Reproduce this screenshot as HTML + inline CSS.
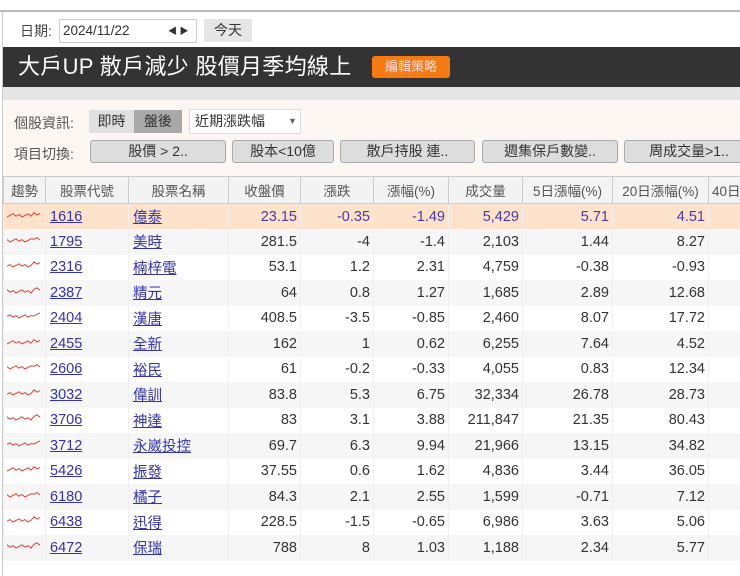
<!DOCTYPE html>
<html><head><meta charset="utf-8"><style>
*{margin:0;padding:0;box-sizing:border-box}
body{width:740px;height:576px;background:#fff;font-family:"Liberation Sans","Noto Sans CJK TC",sans-serif;color:#333;position:relative;overflow:hidden}
.a{position:absolute}
.top{left:0;top:10px;width:740px;height:2px;background:#bbb}
.lb{left:2px;top:12px;width:1px;height:564px;background:#ccc}
.btn{position:absolute;background:#ddd;border:1px solid #aaa;border-radius:3px;font-size:14px;text-align:center;line-height:20px;color:#333}
table{position:absolute;left:3px;top:176px;border-collapse:collapse;font-size:14.5px;table-layout:fixed;width:770px}
td,th{height:25.5px;padding:0 3px 0 3px;white-space:nowrap;overflow:hidden}
th{font-weight:normal;font-size:13.5px;color:#555;background:#f3f3f3;border:1px solid #ccc;height:27px;text-align:center}
td{text-align:right;border-left:1px solid #f0f0f0}
td.l{text-align:left;padding-left:4px}
td a{color:#3333aa;text-decoration:underline}
tr:nth-child(even) td{background:#f6f6f6}
tr.sel td{background:#fde2cc;color:#4a3aa8}
</style></head><body>
<div class="a top"></div><div class="a lb"></div>
<div class="a" style="left:20px;top:21px;font-size:14px;color:#444">日期:</div>
<div class="a" style="left:59px;top:19px;width:138px;height:24px;border:1px solid #ccc;background:#fff;font-size:13.5px;line-height:22px;padding-left:3px">2024/11/22<span style="position:absolute;left:108px;font-size:9px">◀ ▶</span></div>
<div class="a" style="left:204px;top:19px;width:48px;height:23px;background:#e6e6e6;font-size:14px;text-align:center;line-height:23px">今天</div>
<div class="a" style="left:3px;top:47px;width:737px;height:40px;background:#333"></div>
<div class="a" style="left:18px;top:53px;font-size:22px;color:#fff;line-height:28px;letter-spacing:0.3px">大戶UP 散戶減少 股價月季均線上</div>
<div class="a" style="left:372px;top:56px;width:78px;height:22px;background:#f47a12;border-radius:3px;color:#fde;font-size:13px;text-align:center;line-height:22px">編輯策略</div>
<div class="a" style="left:3px;top:87px;width:737px;height:13px;background:#e6e6e6"></div>
<div class="a" style="left:3px;top:100px;width:737px;height:76px;background:#fdf7f3"></div>
<div class="a" style="left:14px;top:113px;font-size:14px;color:#555">個股資訊:</div>
<div class="a" style="left:89px;top:110px;width:45px;height:23px;background:#e0e0e0;font-size:14px;text-align:center;line-height:23px">即時</div>
<div class="a" style="left:134px;top:110px;width:48px;height:23px;background:#a9a9a9;font-size:14px;text-align:center;line-height:23px">盤後</div>
<div class="a" style="left:189px;top:109px;width:112px;height:25px;background:#fff;border:1px solid #ddd;font-size:14px;line-height:23px;padding-left:5px">近期漲跌幅<span style="position:absolute;left:98px;font-size:9px;color:#666">▼</span></div>
<div class="a" style="left:14px;top:144px;font-size:14px;color:#555">項目切換:</div>
<div class="btn" style="left:90px;top:140px;width:136px;height:23px">股價 &gt; 2..</div>
<div class="btn" style="left:232px;top:140px;width:102px;height:23px">股本&lt;10億</div>
<div class="btn" style="left:340px;top:140px;width:135px;height:23px">散戶持股 連..</div>
<div class="btn" style="left:482px;top:140px;width:136px;height:23px">週集保戶數變..</div>
<div class="btn" style="left:624px;top:140px;width:130px;height:23px">周成交量&gt;1..</div>
<table>
<colgroup><col style="width:42px"><col style="width:83px"><col style="width:100px"><col style="width:72px"><col style="width:73px"><col style="width:75px"><col style="width:74px"><col style="width:90px"><col style="width:96px"><col style="width:65px"></colgroup>
<tr><th>趨勢</th><th>股票代號</th><th>股票名稱</th><th>收盤價</th><th>漲跌</th><th>漲幅(%)</th><th>成交量</th><th>5日漲幅(%)</th><th>20日漲幅(%)</th><th style="text-align:left">40日</th></tr>
<tbody id="b"></tbody>
</table>
<script>
var d=[["1616","億泰","23.15","-0.35","-1.49","5,429","5.71","4.51"],["1795","美時","281.5","-4","-1.4","2,103","1.44","8.27"],["2316","楠梓電","53.1","1.2","2.31","4,759","-0.38","-0.93"],["2387","精元","64","0.8","1.27","1,685","2.89","12.68"],["2404","漢唐","408.5","-3.5","-0.85","2,460","8.07","17.72"],["2455","全新","162","1","0.62","6,255","7.64","4.52"],["2606","裕民","61","-0.2","-0.33","4,055","0.83","12.34"],["3032","偉訓","83.8","5.3","6.75","32,334","26.78","28.73"],["3706","神達","83","3.1","3.88","211,847","21.35","80.43"],["3712","永崴投控","69.7","6.3","9.94","21,966","13.15","34.82"],["5426","振發","37.55","0.6","1.62","4,836","3.44","36.05"],["6180","橘子","84.3","2.1","2.55","1,599","-0.71","7.12"],["6438","迅得","228.5","-1.5","-0.65","6,986","3.63","5.06"],["6472","保瑞","788","8","1.03","1,188","2.34","5.77"]];
var h="";d.forEach(function(r,i){var p="";for(var k=0;k<12;k++){p+=(k*3)+","+(8-((k*37+i*13)%5)*0.8-(k>8?2:0)).toFixed(1)+" ";}
h+='<tr'+(i==0?' class="sel"':'')+'><td class="l" style="padding:0 3px"><svg width="36" height="12"><polyline points="'+p+'" fill="none" stroke="#d43" stroke-width="1"/></svg></td><td class="l"><a>'+r[0]+'</a></td><td class="l"><a>'+r[1]+'</a></td>';
for(var j=2;j<8;j++)h+='<td>'+r[j]+'</td>';h+='<td></td></tr>';});
document.getElementById("b").innerHTML=h;
</script>
</body></html>
